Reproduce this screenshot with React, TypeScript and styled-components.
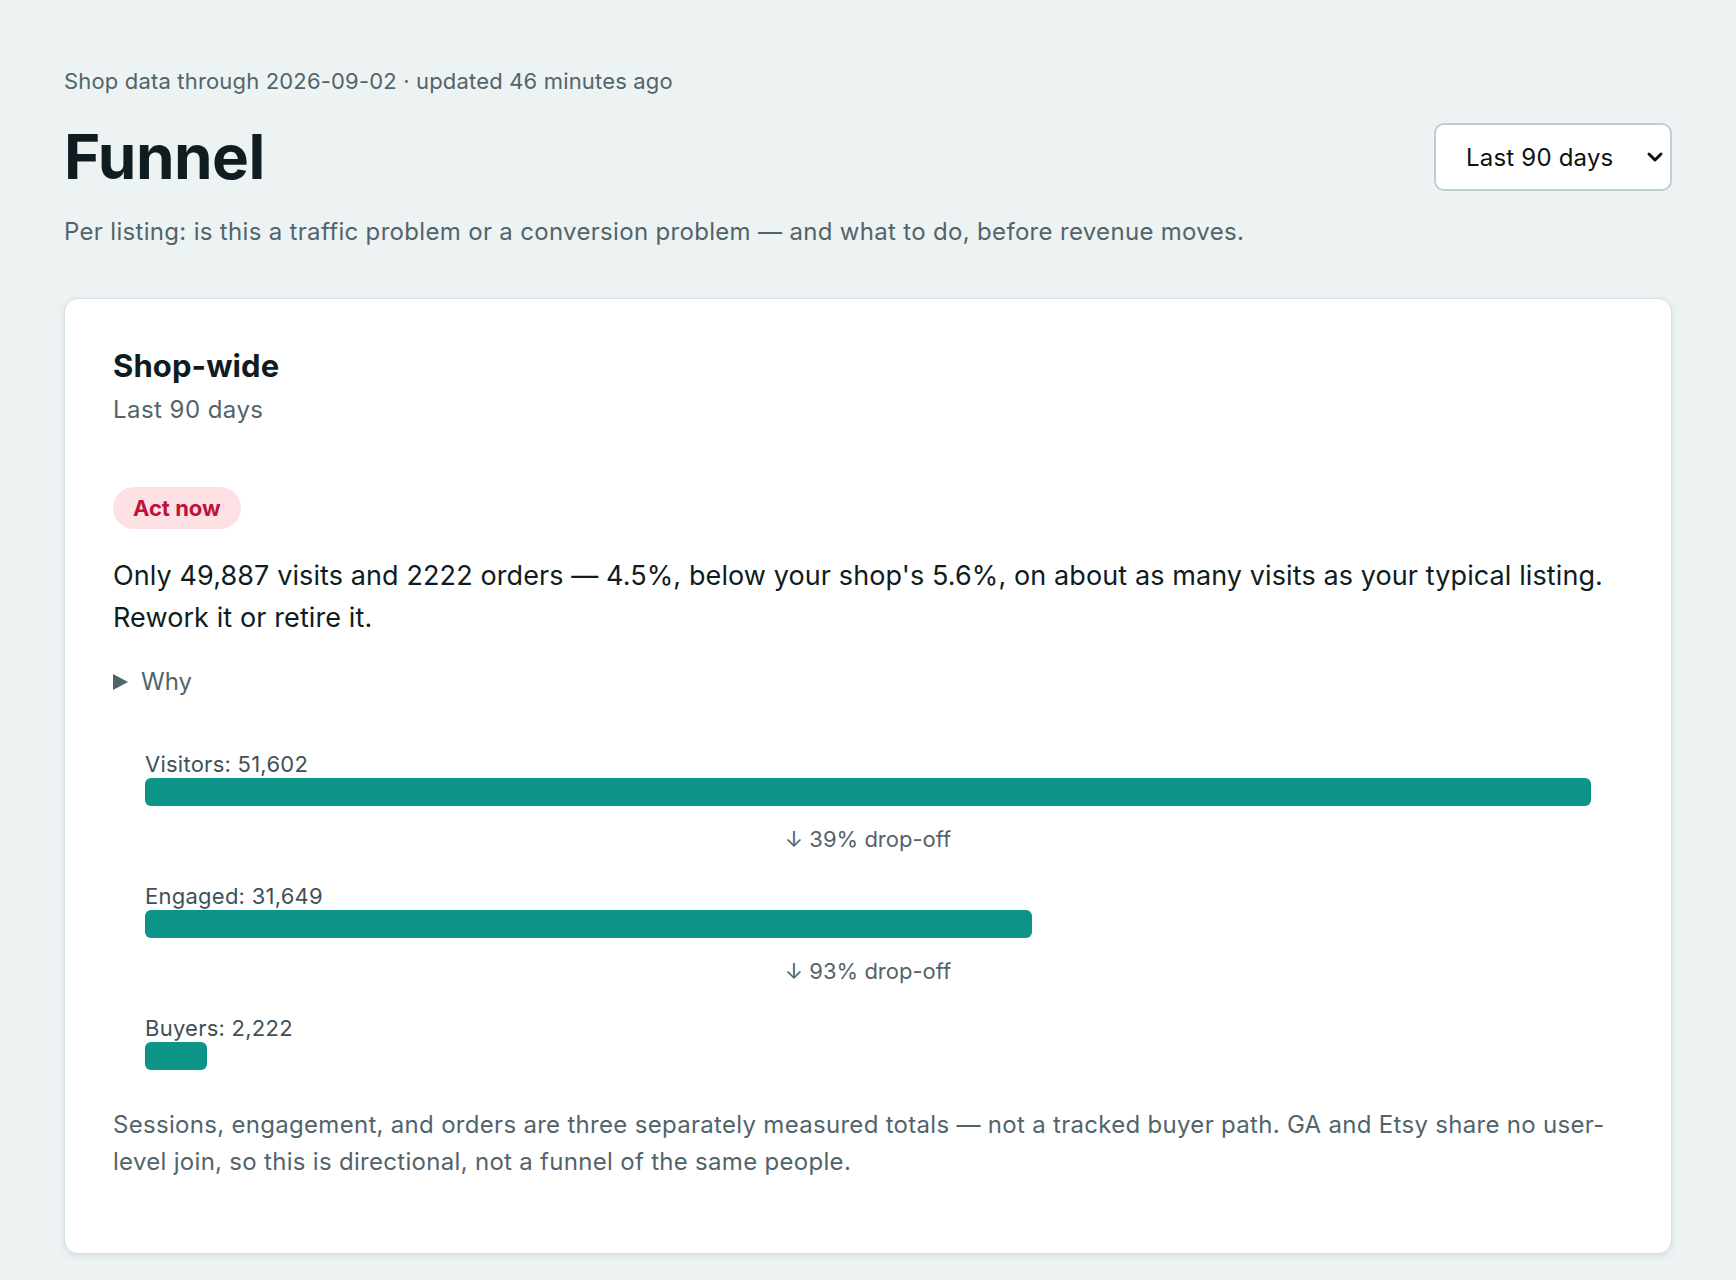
import { FC } from 'react';
import styled, { createGlobalStyle } from 'styled-components';

const GlobalStyle = createGlobalStyle`
  * {
    box-sizing: border-box;
  }
  body {
    margin: 0;
    background: #edf3f3;
    font-family: Inter, 'Noto Sans', 'Liberation Sans', sans-serif;
    color: #0f1c21;
  }
`;

type Step = {
  label: string;
  value: number;
};

const steps: Step[] = [
  { label: 'Visitors', value: 51602 },
  { label: 'Engaged', value: 31649 },
  { label: 'Buyers', value: 2222 }
];

const Page = styled.main`
  padding: 66px 64px 64px;
`;

// 上部のヘッダー
const Eyebrow = styled.div`
  font-size: 22px;
  line-height: 31px;
  letter-spacing: 0.17px;
  color: #52646b;
`;

const TitleRow = styled.div`
  margin-top: 26px;
  display: flex;
  align-items: center;
  justify-content: space-between;
`;

const Title = styled.h1`
  margin: 0;
  font-size: 62px;
  line-height: 68px;
  font-weight: 700;
  letter-spacing: -0.5px;
  color: #0f1c21;
`;

const SelectWrap = styled.div`
  position: relative;
  width: 238px;
  height: 68px;
`;

const Select = styled.select`
  appearance: none;
  width: 100%;
  height: 100%;
  padding: 0 48px 0 30px;
  border: 2px solid #bccfd4;
  border-radius: 10px;
  background: #fff;
  font-family: inherit;
  font-size: 24px;
  letter-spacing: 0.2px;
  color: #111;
`;

// セレクトの矢印
const Chevron = styled.svg`
  position: absolute;
  right: 8px;
  top: 50%;
  width: 18px;
  height: 18px;
  transform: translateY(-50%);
  pointer-events: none;
`;

const Lead = styled.p`
  margin: 24px 0 0;
  font-size: 24px;
  line-height: 34px;
  letter-spacing: 0.32px;
  color: #52646b;
`;

// カード
const Card = styled.section`
  margin-top: 49px;
  background: #fff;
  border: 1px solid #d2e1e4;
  border-radius: 14px;
  box-shadow: 0 2px 6px rgba(60, 100, 110, 0.14);
  padding: 48px 48px 73px;
`;

const CardTitle = styled.h2`
  margin: 0;
  font-size: 31px;
  line-height: 38px;
  font-weight: 700;
  letter-spacing: 0.1px;
  color: #0f1c21;
`;

const CardSub = styled.div`
  margin-top: 8px;
  font-size: 24px;
  line-height: 34px;
  letter-spacing: 0.45px;
  color: #52646b;
`;

const Pill = styled.span`
  margin-top: 60px;
  display: inline-flex;
  align-items: center;
  height: 42px;
  padding: 0 20px;
  border-radius: 21px;
  background: #fde1e5;
  color: #be123c;
  font-size: 22px;
  font-weight: 700;
`;

const Verdict = styled.p`
  margin: 26px 0 0;
  font-size: 27px;
  line-height: 42px;
  letter-spacing: 0.1px;
  color: #0f1c21;
`;

const Why = styled.details`
  margin-top: 26px;
`;

const WhySummary = styled.summary`
  list-style: none;
  display: flex;
  align-items: center;
  gap: 13px;
  font-size: 24px;
  line-height: 34px;
  color: #52646b;
  cursor: pointer;

  &::-webkit-details-marker {
    display: none;
  }

  &::before {
    content: '';
    width: 0;
    height: 0;
    border-top: 8px solid transparent;
    border-bottom: 8px solid transparent;
    border-left: 15px solid #52646b;
  }
`;

// ファネル
const Funnel = styled.div`
  margin-top: 52px;
  padding: 0 32px;
`;

const StepLabel = styled.div`
  font-size: 22px;
  line-height: 27px;
  letter-spacing: 0.25px;
  color: #3f5158;
`;

const Track = styled.div`
  height: 28px;
`;

const Bar = styled.div`
  height: 100%;
  background: #0d9488;
  border-radius: 6px;
`;

const DropOff = styled.div`
  margin: 20px 0 30px;
  text-align: center;
  font-size: 22px;
  line-height: 27px;
  color: #52646b;
`;

const Footnote = styled.p`
  margin: 36px 0 0;
  font-size: 24px;
  line-height: 37px;
  letter-spacing: 0.3px;
  color: #52646b;
`;

const fmt = (n: number) => n.toLocaleString('en-US');

const App: FC = () => {
  const top = steps[0].value;

  return (
    <>
      <GlobalStyle />
      <Page>
        <Eyebrow>Shop data through 2026-09-02 · updated 46 minutes ago</Eyebrow>
        <TitleRow>
          <Title>Funnel</Title>
          <SelectWrap>
            <Select defaultValue="90">
              <option value="30">Last 30 days</option>
              <option value="90">Last 90 days</option>
              <option value="365">Last 365 days</option>
            </Select>
            <Chevron viewBox="0 0 18 18">
              <path d="M3 6l6 6 6-6" fill="none" stroke="#111" strokeWidth="3" strokeLinecap="round" strokeLinejoin="round" />
            </Chevron>
          </SelectWrap>
        </TitleRow>
        <Lead>Per listing: is this a traffic problem or a conversion problem — and what to do, before revenue moves.</Lead>

        <Card>
          <CardTitle>Shop-wide</CardTitle>
          <CardSub>Last 90 days</CardSub>
          <Pill>Act now</Pill>
          <Verdict>
            Only 49,887 visits and 2222 orders — 4.5%, below your shop's 5.6%, on about as many visits as your typical
            listing. Rework it or retire it.
          </Verdict>
          <Why>
            <WhySummary>Why</WhySummary>
          </Why>
          <Funnel>
            {steps.map((step, i) => {
              const next = steps[i + 1];
              return (
                <div key={step.label}>
                  <StepLabel>{`${step.label}: ${fmt(step.value)}`}</StepLabel>
                  <Track>
                    <Bar style={{ width: `${(step.value / top) * 100}%` }} />
                  </Track>
                  {next && <DropOff>{`↓ ${Math.round((1 - next.value / step.value) * 100)}% drop-off`}</DropOff>}
                </div>
              );
            })}
          </Funnel>
          <Footnote>
            Sessions, engagement, and orders are three separately measured totals — not a tracked buyer path. GA and
            Etsy share no user-level join, so this is directional, not a funnel of the same people.
          </Footnote>
        </Card>
      </Page>
    </>
  );
};

export default App;
